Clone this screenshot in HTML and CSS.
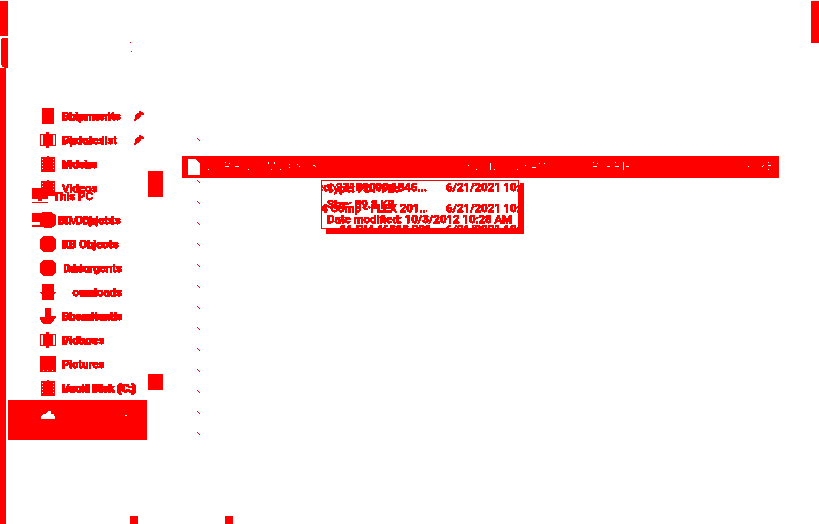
FILE: index.html
```html
<!DOCTYPE html>
<html lang="en">
<head>
<meta charset="utf-8">
<title>File Explorer</title>
<link rel="stylesheet" href="styles.css">
</head>
<body>
<svg class="defs" width="0" height="0" aria-hidden="true">
  <defs>
    <filter id="mask" color-interpolation-filters="sRGB" x="0" y="0" width="100%" height="100%">
      <feComponentTransfer>
        <feFuncR type="linear" slope="0" intercept="1"/>
        <feFuncG type="discrete" tableValues="0 0 0 0 0 0 0 0 0 0 0 0 0 0 0 1"/>
        <feFuncB type="discrete" tableValues="0 0 0 0 0 0 0 0 0 0 0 0 0 0 0 1"/>
      </feComponentTransfer>
    </filter>
    <symbol id="folder" viewBox="0 0 16 16"><path d="M1 0h14l1 1v13l-1 2H1l-1-2V1zM3 14v1h1v-1zM7 14v1h1v-1zM12 14v1h1v-1z" fill-rule="evenodd"/></symbol>
    <symbol id="doc" viewBox="0 0 16 16"><rect x="2" y="0" width="12" height="16"/></symbol>
    <symbol id="film" viewBox="0 0 16 16"><path d="M1 1h6V0h2v1h6v15H1zM2 3v1h1V3zM2 6v1h1V6zM2 9v1h1V9zM2 12v1h1v-1zM13 3v1h1V3zM13 6v1h1V6zM13 9v1h1V9zM13 12v1h1v-1z" fill-rule="evenodd"/></symbol>
    <symbol id="disc" viewBox="0 0 16 16"><path d="M4 0h8l4 4v8l-4 4H4l-4-4V4z"/></symbol>
    <symbol id="dl" viewBox="0 0 16 16"><rect x="2" y="0" width="12" height="16"/><path d="M0 8h16l-2 2H2z"/></symbol>
    <symbol id="pin" viewBox="0 0 10 10"><path d="M6 0l4 3-1 1-2 0-2 3 0 1-1 0-1-1-2 3H0l2-4-1-1 0-1 1 0 3-2 0-2z"/></symbol>
    <symbol id="arrow" viewBox="0 0 16 16"><path d="M5 0h6v8h5v1l-6 7H4L0 11V9h5z"/></symbol>
    <symbol id="frame" viewBox="0 0 16 16"><path d="M0 2h16v12H0zM1 3v10h14V3z" fill-rule="evenodd"/><rect x="3" y="3" width="10" height="11"/><rect x="6" y="0" width="3" height="16"/></symbol>
    <symbol id="pc" viewBox="0 0 16 16"><rect x="0" y="0" width="16" height="11"/><rect x="6" y="11" width="4" height="2"/><rect x="0" y="14" width="16" height="1"/></symbol>
    <symbol id="obj" viewBox="0 0 24 16"><path d="M0 1h10l4-1h4l6 4v8l-5 4h-7v-1H0v-2h8v-3H0z"/></symbol>
    <symbol id="cloud" viewBox="0 0 14 8"><path d="M0 8V5l2-2h2l2-2 1-1h3l1 3h2l1 2v3z"/></symbol>
    <symbol id="tick" viewBox="0 0 4 4"><path d="M0 0h1v1h1v1h1v1H2V2H1V1H0z"/></symbol>
  </defs>
</svg>

<div class="app">
  <div class="edge">
    <div class="edge-top"></div>
    <div class="edge-tab"></div>
    <div class="edge-rest"></div>
  </div>

  <nav class="side">
    <div class="dots"><i></i><i></i></div>
    <ul class="list quick">
      <li class="row"><svg class="ico"><use href="#doc"/></svg><span class="lbl"><b>Documents</b><b>Shipments</b></span><svg class="pin"><use href="#pin"/></svg></li>
      <li class="row"><svg class="ico"><use href="#frame"/></svg><span class="lbl"><b>Update list</b><b>Pictures</b></span><svg class="pin"><use href="#pin"/></svg></li>
      <li class="row"><svg class="ico"><use href="#film"/></svg><span class="lbl"><b>Music</b><b>Videos</b></span></li>
      <li class="row"><svg class="ico"><use href="#film"/></svg><span class="lbl"><b>Videos</b></span></li>
    </ul>
    <ul class="list tree">
      <li class="row top"><svg class="ico"><use href="#pc"/></svg><span class="lbl"><b>This PC</b></span></li>
      <li class="row sub"><svg class="ico wide"><use href="#obj"/></svg><span class="lbl"><b>3D Objects</b><b>BIM Objects</b></span></li>
      <li class="row"><svg class="ico"><use href="#disc"/></svg><span class="lbl"><b>3D Objects</b><b>KB Objects</b></span></li>
      <li class="row"><svg class="ico"><use href="#disc"/></svg><span class="lbl end"><b>Documents</b><b>ablorgents</b></span></li>
      <li class="row"><svg class="ico"><use href="#dl"/></svg><span class="lbl end"><b>ownloads</b><b>orrloads</b></span></li>
      <li class="row"><svg class="ico"><use href="#arrow"/></svg><span class="lbl"><b>Downloads</b><b>Showrloads</b></span></li>
      <li class="row"><svg class="ico"><use href="#frame"/></svg><span class="lbl"><b>Pictures</b><b>Videos</b></span></li>
      <li class="row"><svg class="ico"><use href="#folder"/></svg><span class="lbl"><b>Pictures</b><b>P ctures</b></span></li>
      <li class="row"><svg class="ico"><use href="#film"/></svg><span class="lbl"><b>Local Disk (C:)</b><b>Vault Disk (C:)</b></span></li>
    </ul>
    <div class="cloud"><svg class="cloud-ico"><use href="#cloud"/></svg><i class="cloud-dot"></i></div>
  </nav>

  <div class="rail">
    <i class="thumb a"></i>
    <i class="thumb b"></i>
  </div>

  <main class="files">
    <div class="line"><svg class="tick"><use href="#tick"/></svg></div>
    <div class="sel">
      <svg class="sel-ico" viewBox="0 0 12 16"><path d="M0 0h8l4 4v12H0z"/></svg>
      <span class="c-name">2 1 Press - 2 M 2019 03</span>
      <span class="c-date">10/3/2012 10:28 AM</span>
      <span class="c-type">PDF File</span>
      <span class="c-size">90 KB</span>
    </div>
    <div class="line"><svg class="tick"><use href="#tick"/></svg><span class="name one">Project 23189000 1845...</span><span class="date">6/21/2021 10:34 AM</span></div>
    <div class="line"><svg class="tick"><use href="#tick"/></svg><span class="name two">4 Comp - FLEX 201...</span><span class="date">6/21/2021 10:41 AM</span></div>
    <div class="line"><svg class="tick"><use href="#tick"/></svg><span class="name three">11 PM 46818 2016</span><span class="date">6/21/2021 10:38 AM</span></div>
    <div class="line"><svg class="tick"><use href="#tick"/></svg></div>
    <div class="line"><svg class="tick"><use href="#tick"/></svg></div>
    <div class="line"><svg class="tick"><use href="#tick"/></svg></div>
    <div class="line"><svg class="tick"><use href="#tick"/></svg></div>
    <div class="line"><svg class="tick"><use href="#tick"/></svg></div>
    <div class="line"><svg class="tick"><use href="#tick"/></svg></div>
    <div class="line"><svg class="tick"><use href="#tick"/></svg></div>
    <div class="line"><svg class="tick"><use href="#tick"/></svg></div>
    <div class="line"><svg class="tick"><use href="#tick"/></svg></div>
    <div class="line"><svg class="tick"><use href="#tick"/></svg></div>
    <div class="tip">
      <div>Type: PDF File</div>
      <div>Size: 89.8 KB</div>
      <div>Date modified: 10/3/2012 10:28 AM</div>
    </div>
  </main>

  <i class="corner"></i>
  <div class="foot"><i></i><i></i></div>
</div>
</body>
</html>
```
FILE: styles.css
```css
* { box-sizing: border-box; }
html, body { margin: 0; padding: 0; background: #fff; }
body { width: 819px; height: 524px; overflow: hidden; font-family: Roboto, "Noto Sans", sans-serif; font-size: 11.5px; line-height: 16px; color: #000; }
.defs { display: block; height: 0; }
ul { list-style: none; margin: 0; padding: 0; }
i { display: block; font-style: normal; }
b { font-weight: 500; grid-area: 1 / 1; -webkit-text-stroke: 0.25px #000; }

.app { position: relative; display: flex; width: 819px; height: 524px; background: #fff; filter: url(#mask); overflow: hidden; }

.edge { flex: none; width: 8px; display: flex; flex-direction: column; }
.edge-top { height: 35px; margin-top: 1px; background: #000; }
.edge-tab { height: 30px; margin-top: 2px; margin-left: 1px; background: #000; border-radius: 4px 0 0 6px; }
.edge-rest { flex: 1; width: 6px; background: #000; }

.side { flex: none; width: 139px; position: relative; padding-top: 104px; }
.dots i { position: absolute; width: 1px; height: 1px; background: #000; left: 122px; top: 42px; }
.dots i + i { left: 123px; top: 51px; }
.list { display: flex; flex-direction: column; }
.tree { margin-top: -16px; }
.row { height: 24px; display: flex; align-items: center; padding-left: 32px; }
.row.top { padding-left: 24px; }
.row.sub { padding-left: 24px; }
.ico { flex: none; width: 16px; height: 16px; fill: #000; }
.ico.wide { width: 24px; }
.lbl { display: grid; width: 62px; margin-left: 6px; white-space: nowrap; flex: none; }
.row.top .lbl { margin-left: 5px; }
.row.sub .lbl { margin-left: 2px; }
.lbl.end { width: 60px; justify-items: end; }
.pin { flex: none; width: 10px; height: 10px; fill: #000; margin-left: 10px; }

.cloud { position: absolute; left: 0; top: 400px; width: 139px; height: 40px; background: #000; }
.cloud-ico { position: absolute; left: 33px; top: 11px; width: 14px; height: 8px; fill: #fff; }
.cloud-dot { position: absolute; left: 117px; top: 15px; width: 2px; height: 1px; background: #fff; }

.rail { flex: none; width: 34px; position: relative; }
.thumb { position: absolute; left: 1px; width: 15px; background: #000; }
.thumb.a { top: 171px; height: 26px; }
.thumb.b { top: 374px; height: 16px; }

.files { flex: none; width: 598px; position: relative; padding-top: 135px; }
.line { height: 21px; padding: 3px 0 0 16px; white-space: nowrap; position: relative; }
.tick { display: block; width: 4px; height: 4px; fill: #000; }
.sel { height: 22px; margin: 0 0 -1px 1px; background: #000; color: #fff; position: relative; font-size: 10.5px; font-weight: 400; line-height: 22px; white-space: nowrap; display: flex; align-items: center; }
.sel-ico { width: 12px; height: 16px; fill: #fff; margin-left: 6px; flex: none; }
.sel span { flex: none; }
.c-name { margin-left: 7px; width: 242px; }
.c-date { width: 143px; }
.c-type { width: 154px; }
.c-size { letter-spacing: 0; }

.name, .date { position: absolute; top: 2px; height: 15px; overflow: hidden; font-weight: 500; -webkit-text-stroke: 0.25px #000; }
.date { left: 265px; width: 78px; }
.name { left: 140px; width: 106px; }
.one { display: flex; justify-content: flex-end; }
.three { left: 159px; width: 90px; }

.tip { position: absolute; left: 140px; top: 180px; width: 198px; height: 49px; border: 1px solid #000; padding: 0 5px; font-weight: 500; line-height: 15.5px; white-space: nowrap; box-shadow: 5px 5px 0 0 #000; -webkit-text-stroke: 0.25px #000; }

.corner { position: absolute; left: 811px; top: 1px; width: 8px; height: 42px; background: #000; }
.foot i { position: absolute; top: 516px; width: 8px; height: 8px; background: #000; left: 130px; }
.foot i + i { left: 225px; }
```
